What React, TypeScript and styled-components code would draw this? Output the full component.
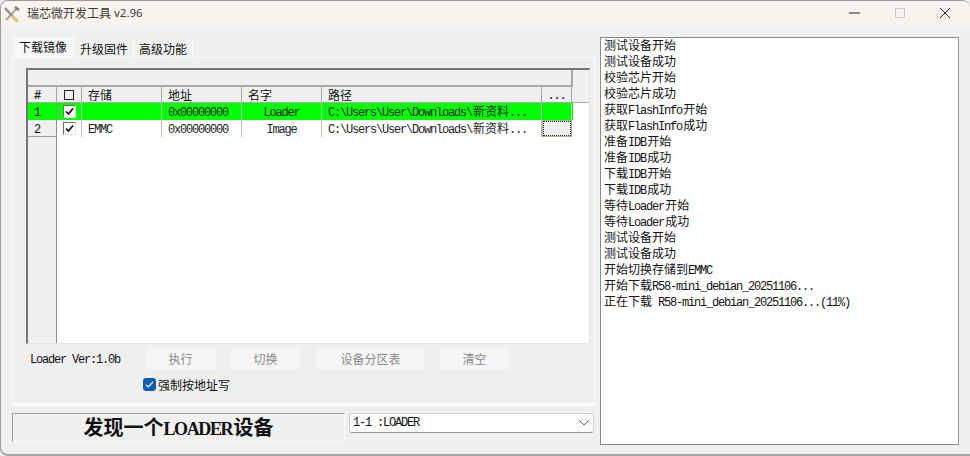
import React from 'react';
import styled, { createGlobalStyle } from 'styled-components';

const Global = createGlobalStyle`
  html, body { margin: 0; padding: 0; background: #efefef; }
  body { width: 970px; height: 456px; overflow: hidden; font-family: "Noto Sans CJK SC", sans-serif; }
`;

const Window = styled.div`
  width: 970px; height: 456px; box-sizing: border-box;
  background: #f0f0f0;
  border: 1px solid #9b9b9b; border-right: none; border-bottom: 2px solid #a3a3a3;
  border-radius: 8px 8px 0 8px;
  display: flex; flex-direction: column; overflow: hidden;
`;
const TitleBar = styled.div`
  height: 25px; flex: none; background: #f8f3ec;
  display: flex; align-items: center; padding: 0 3px 0 1px;
`;
const Title = styled.span`
  margin-left: 5px; padding-bottom: 2px; font-size: 12px; color: #3a3a3a;
  display: flex; align-items: center; gap: 3px; flex: 1;
`;
const TitleVersion = styled.span`font-family: "Noto Sans", sans-serif; font-size: 11.5px;`;
const WinBtn = styled.div`
  width: 45px; height: 25px; display: flex; align-items: center; justify-content: center; flex: none; padding-bottom: 1px; box-sizing: border-box;
`;
const Body = styled.div`
  flex: 1; display: flex; padding: 11px; gap: 5px; min-height: 0;
`;
const LeftCol = styled.div`
  width: 583px; flex: none; display: flex; flex-direction: column;
`;
const Tabs = styled.div`display: flex; height: 20px; flex: none; align-items: flex-end; padding-left: 1px;`;
const Tab = styled.div<{ $active?: boolean }>`
  font-size: 12px; color: #111; white-space: nowrap; box-sizing: border-box;
  height: ${p => (p.$active ? 20 : 18)}px; line-height: 20px;
  padding: ${p => (p.$active ? '0 8px 0 6px' : '0 5px')};
  background: ${p => (p.$active ? '#f7f7f7' : '#f0f0f0')};
  border-right: ${p => (p.$active ? 'none' : '1px solid #fafafa')};
`;
const TabPage = styled.div`
  height: 349px; flex: none; box-sizing: border-box;
  background: #efefef;
  border-left: 1px solid #fafafa; border-right: 1px solid #f9f9f9; border-top: 1px solid #fafafa;
  border-bottom: 3px solid #f9f9f9;
  padding: 10px 4px 0 13px;
  display: flex; flex-direction: column;
`;
const Table = styled.div`
  height: 276px; flex: none; box-sizing: border-box; background: #fff;
  border-top: 2px solid #767676; border-left: 2px solid #767676;
  border-right: 1px solid #e4e4e4; border-bottom: 1px solid #e4e4e4;
  display: flex; flex-direction: column; position: relative;
`;
const cols = '29px 25px 80px 80px 80px 220px 30px';
const HeadBlock = styled.div`
  flex: none; background: #f0f0f0; border-bottom: 1px solid #a6a6a6; position: relative;
`;
const BlankHead = styled.div`
  height: 17px; width: 545px; box-sizing: border-box;
  border-bottom: 2px solid #a8a8a8; border-right: 2px solid #a8a8a8;
`;
const HeadRow = styled.div`
  display: grid; grid-template-columns: ${cols}; width: 545px; height: 15px;
`;
const HeadCell = styled.div<{ $center?: boolean }>`
  font-size: 12px; line-height: 16px; color: #111; box-sizing: border-box; white-space: nowrap;
  border-right: 1px solid #a8a8a8; padding-left: ${p => (p.$center ? 0 : 6)}px;
  text-align: ${p => (p.$center ? 'center' : 'left')};
`;
const HeadLatin = styled(HeadCell)`
  font-family: "Liberation Mono", monospace; font-size: 12px; letter-spacing: -1.2px; line-height: 18px;
`;
const HeadNumber = styled(HeadLatin)`padding-left: 6px; font-weight: 700;`;
const Row = styled.div<{ $green?: boolean }>`
  display: grid; grid-template-columns: ${cols}; width: 545px; height: 17px; flex: none; position: relative;
  background: ${p => (p.$green ? '#00ff00' : '#fff')};
`;
const Cell = styled.div<{ $center?: boolean; $green?: boolean }>`
  font-family: "Liberation Mono", "Noto Sans CJK SC", monospace; font-size: 12px; letter-spacing: -1.2px; line-height: 21px;
  color: #222; box-sizing: border-box; white-space: nowrap; overflow: hidden;
  border-right: 1px solid ${p => (p.$green ? '#a9cfa9' : '#b9b9b9')};
  padding-left: ${p => (p.$center ? 0 : 6)}px;
  text-align: ${p => (p.$center ? 'center' : 'left')};
`;
const IndexCell = styled(Cell)`
  background: #f0f0f0; border-bottom: 1px solid #a0a0a0;
  color: #111; border-right: 1px solid #8f8f8f;
`;
const GreenIndex = styled(IndexCell)`background: #00ff00; border-bottom: none;`;
const CheckCell = styled.div<{ $green?: boolean }>`
  display: flex; align-items: center; justify-content: center; box-sizing: border-box;
  border-right: 1px solid ${p => (p.$green ? '#a9cfa9' : '#b9b9b9')};
`;
const CheckBox = styled.div`
  width: 13px; height: 13px; box-sizing: border-box; background: #fff;
  border: 1px solid #6f6f6f; border-right-color: #e4e4e4; border-bottom-color: #e4e4e4;
  display: flex; align-items: center; justify-content: center;
`;
const CjkInCell = styled.span`font-size: 12px; letter-spacing: 0; font-family: "Noto Sans CJK SC", sans-serif; margin-left: 1px; line-height: 16px;`;
const EllipsisBtn = styled.div`
  background: #efefef; box-sizing: border-box; border: 1px solid #b8ac9c;
  outline: 1px dotted #222; outline-offset: -2px;
`;
const GutterColumn = styled.div`
  position: absolute; left: 0; top: 67px; bottom: 0; width: 29px;
  background: #f0f0f0; border-right: 1px solid #8f8f8f; box-sizing: border-box;
`;
const ToolRow = styled.div`
  display: flex; align-items: center; height: 23px; flex: none; margin-top: 3px;
`;
const LoaderVer = styled.span`
  font-family: "Liberation Mono", monospace; font-size: 12px; letter-spacing: -1.2px; color: #111;
  width: 115px; margin-left: 4px; flex: none; padding-top: 3px;
`;
const DisabledBtn = styled.div<{ $w: number; $mr: number }>`
  width: ${p => p.$w}px; margin-right: ${p => p.$mr}px; height: 23px; flex: none; border-radius: 3px;
  background: #f6f6f6; border: 1px solid #f2f2f2; box-sizing: border-box;
  font-size: 12px; line-height: 21px; color: #8a8a8a; text-align: center;
`;
const ForceRow = styled.label`
  display: flex; align-items: center; height: 20px; margin-top: 4px; margin-left: 117px;
  font-size: 12px; color: #111; gap: 2px;
`;
const BlueCheck = styled.div`
  width: 13px; height: 13px; border-radius: 3px; background: #0a5fb4;
  display: flex; align-items: center; justify-content: center; flex: none;
`;
const BottomRow = styled.div`
  display: flex; align-items: flex-start; margin-top: 7px; height: 29px;
`;
const Status = styled.div`
  width: 333px; height: 29px; box-sizing: border-box; flex: none;
  border-top: 1px solid #a0a0a0; border-left: 1px solid #a0a0a0;
  border-right: 1px solid #fafafa; border-bottom: 1px solid #fafafa;
  text-align: center; font-family: "Noto Sans CJK SC", sans-serif; font-weight: 700;
  font-size: 20px; line-height: 26px; color: #111; white-space: nowrap;
`;
const StatusLatin = styled.span`font-family: "Liberation Serif", serif; font-size: 18px; letter-spacing: -1.4px; padding-right: 1.4px;`;
const Select = styled.div`
  margin-left: 4px; width: 245px; height: 20px; box-sizing: border-box; flex: none;
  background: #fdfdfd; border: 1px solid #cfcfcf; border-bottom-color: #9a9a9a; border-radius: 3px;
  display: flex; align-items: center; justify-content: space-between; padding: 0 3px;
  font-family: "Liberation Mono", monospace; font-size: 12px; letter-spacing: -1.2px; color: #111;
`;
const Log = styled.div`
  width: 359px; height: 408px; flex: none; box-sizing: border-box; background: #fff;
  border: 1px solid #8a8a8a; border-right-color: #9a9a9a; padding: 0 3px;
`;
const LogLine = styled.div`
  height: 16px; font-size: 12px; line-height: 14px; color: #111; white-space: pre;
`;
const L = styled.span`font-family: "Liberation Mono", monospace; font-size: 12px; letter-spacing: -1.2px; padding-right: 1.2px;`;

const logLines: [string, boolean][][] = [
  [['测试设备开始', false]],
  [['测试设备成功', false]],
  [['校验芯片开始', false]],
  [['校验芯片成功', false]],
  [['获取', false], ['FlashInfo', true], ['开始', false]],
  [['获取', false], ['FlashInfo', true], ['成功', false]],
  [['准备', false], ['IDB', true], ['开始', false]],
  [['准备', false], ['IDB', true], ['成功', false]],
  [['下载', false], ['IDB', true], ['开始', false]],
  [['下载', false], ['IDB', true], ['成功', false]],
  [['等待', false], ['Loader', true], ['开始', false]],
  [['等待', false], ['Loader', true], ['成功', false]],
  [['测试设备开始', false]],
  [['测试设备成功', false]],
  [['开始切换存储到', false], ['EMMC', true]],
  [['开始下载', false], ['R58-mini_debian_20251106...', true]],
  [['正在下载', false], [' R58-mini_debian_20251106...(11%)', true]],
];

const Tick = () => (
  <svg width="9" height="9" viewBox="0 0 9 9"><path d="M1 4.5 L3.5 7 L8 1.5" fill="none" stroke="#111" strokeWidth="1.7" /></svg>
);

const PathText = () => (
  <>C:\Users\User\Downloads\<CjkInCell>新资料</CjkInCell>...</>
);

export default function App() {
  return (
    <Window>
      <Global />
      <TitleBar>
        <svg width="20" height="20" viewBox="0 0 20 20" style={{ flex: 'none' }}>
          <path d="M3 4 L15 17" stroke="#8a8a8a" strokeWidth="2.2" />
          <path d="M15 4 L4 16" stroke="#9a9a8a" strokeWidth="1.8" />
          <path d="M13 3 L17 6" stroke="#777" strokeWidth="2.2" />
          <path d="M10 12 L16 18" stroke="#d8c878" strokeWidth="3" />
        </svg>
        <Title>瑞芯微开发工具 <TitleVersion>v2.96</TitleVersion></Title>
        <WinBtn><svg width="11" height="2" viewBox="0 0 11 2"><path d="M0 1 H11" stroke="#222" strokeWidth="1" /></svg></WinBtn>
        <WinBtn><svg width="10" height="10" viewBox="0 0 10 10"><rect x="0.5" y="0.5" width="9" height="9" fill="none" stroke="#c8c8c8" /></svg></WinBtn>
        <WinBtn><svg width="12" height="12" viewBox="0 0 12 12"><path d="M1 1 L11 11 M11 1 L1 11" stroke="#222" strokeWidth="1" /></svg></WinBtn>
      </TitleBar>
      <Body>
        <LeftCol>
          <Tabs>
            <Tab $active>下载镜像</Tab>
            <Tab>升级固件</Tab>
            <Tab>高级功能</Tab>
          </Tabs>
          <TabPage>
            <Table>
              <GutterColumn />
              <HeadBlock>
                <BlankHead />
                <HeadRow>
                  <HeadNumber>#</HeadNumber>
                  <HeadCell $center><svg width="10" height="10" viewBox="0 0 10 10"><rect x="0.5" y="0.5" width="9" height="9" fill="none" stroke="#222" /></svg></HeadCell>
                  <HeadCell>存储</HeadCell>
                  <HeadCell>地址</HeadCell>
                  <HeadCell>名字</HeadCell>
                  <HeadCell>路径</HeadCell>
                  <HeadLatin $center>...</HeadLatin>
                </HeadRow>
              </HeadBlock>
              <Row $green>
                <GreenIndex>1</GreenIndex>
                <CheckCell $green><CheckBox><Tick /></CheckBox></CheckCell>
                <Cell $green />
                <Cell $green>0x00000000</Cell>
                <Cell $green $center>Loader</Cell>
                <Cell $green><PathText /></Cell>
                <Cell $green />
              </Row>
              <Row>
                <IndexCell>2</IndexCell>
                <CheckCell><CheckBox><Tick /></CheckBox></CheckCell>
                <Cell>EMMC</Cell>
                <Cell>0x00000000</Cell>
                <Cell $center>Image</Cell>
                <Cell><PathText /></Cell>
                <EllipsisBtn />
              </Row>
            </Table>
            <ToolRow>
              <LoaderVer>Loader Ver:1.0b</LoaderVer>
              <DisabledBtn $w={71} $mr={14}>执行</DisabledBtn>
              <DisabledBtn $w={71} $mr={15}>切换</DisabledBtn>
              <DisabledBtn $w={109} $mr={14}>设备分区表</DisabledBtn>
              <DisabledBtn $w={71} $mr={0}>清空</DisabledBtn>
            </ToolRow>
            <ForceRow>
              <BlueCheck><svg width="9" height="9" viewBox="0 0 9 9"><path d="M1 4.8 L3.4 7 L8 2" fill="none" stroke="#fff" strokeWidth="1.2" /></svg></BlueCheck>
              强制按地址写
            </ForceRow>
          </TabPage>
          <BottomRow>
            <Status>发现一个<StatusLatin>LOADER</StatusLatin>设备</Status>
            <Select>
              <span>1-1 :LOADER</span>
              <svg width="12" height="8" viewBox="0 0 12 8"><path d="M1.5 1.5 L6 6 L10.5 1.5" fill="none" stroke="#666" strokeWidth="1" /></svg>
            </Select>
          </BottomRow>
        </LeftCol>
        <Log>
          {logLines.map((line, i) => (
            <LogLine key={i}>
              {line.map(([t, lat], j) => (lat ? <L key={j}>{t}</L> : <span key={j}>{t}</span>))}
            </LogLine>
          ))}
        </Log>
      </Body>
    </Window>
  );
}
